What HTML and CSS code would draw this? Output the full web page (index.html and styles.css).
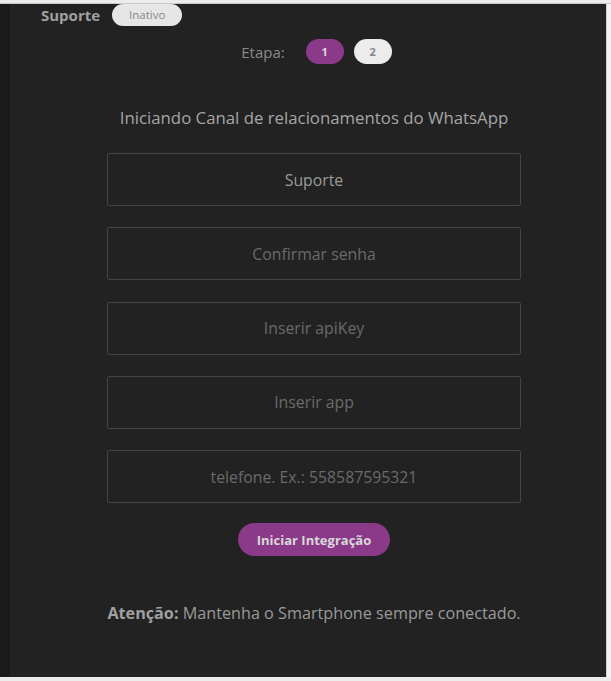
FILE: index.html
```html
<!DOCTYPE html>
<html lang="pt-BR">
<head>
  <meta charset="UTF-8">
  <title>Canal WhatsApp</title>
  <meta name="viewport" content="width=device-width, initial-scale=1">
  <link rel="stylesheet" href="styles.css">
</head>
<body>
  <div class="frame">
    <div class="side"></div>
    <div class="panel">
      <div class="header">
        <span class="channel">Suporte</span>
        <span class="status">Inativo</span>
      </div>

      <div class="steps">
        <span class="steps-label">Etapa:</span>
        <span class="step active">1</span>
        <span class="step">2</span>
      </div>

      <h3 class="title">Iniciando Canal de relacionamentos do WhatsApp</h3>

      <form class="form" id="integrationForm">
        <input type="text" value="Suporte">
        <input type="password" placeholder="Confirmar senha">
        <input type="text" placeholder="Inserir apiKey">
        <input type="text" placeholder="Inserir app">
        <input type="tel" placeholder="telefone. Ex.: 558587595321">
        <button type="submit">Iniciar Integração</button>
      </form>

      <p class="notice"><b>Atenção:</b> Mantenha o Smartphone sempre conectado.</p>
    </div>
    <div class="ruler"></div>
  </div>
</body>
</html>
```

FILE: styles.css
```css
body {
  margin: 0;
  background: #ececec;
  font-family: "Open Sans", Arial, sans-serif;
}
.frame {
  display: flex;
  height: 674px;
  margin-top: 3px;
  border-top: 1px solid #c8c8c8;
  box-sizing: border-box;
}
.side {
  width: 10px;
  background: #1a1a1a;
}
.panel {
  width: 596px;
  background: #222222;
  padding-left: 12px;
  box-sizing: border-box;
  color: #a8a8a8;
}
.ruler {
  flex: 1;
  background: #f2f2f2;
  border-left: 1px solid #d0d0d0;
}
.header {
  display: flex;
  align-items: center;
  gap: 12px;
  padding: 0 0 0 19px;
  height: 26px;
  margin-top: -2px;
}
.channel {
  font-weight: bold;
  font-size: 15px;
  color: #a0a0a0;
}
.status {
  background: #e6e6e6;
  color: #8a8a8a;
  font-size: 11.5px;
  line-height: 22px;
  height: 22px;
  border-radius: 12px;
  padding: 0 17px;
}
.steps {
  display: flex;
  justify-content: center;
  align-items: center;
  gap: 10px;
  margin-top: 11px;
  padding-left: 5px;
}
.steps-label {
  font-size: 15px;
  color: #8a8a8a;
  margin-right: 11px;
}
.step {
  width: 38px;
  height: 25px;
  line-height: 25px;
  border-radius: 13px;
  background: #ececec;
  color: #888;
  text-align: center;
  font-size: 11px;
  font-weight: bold;
}
.step.active {
  background: #8a3a88;
  color: #ddd;
}
.title {
  text-align: center;
  font-weight: normal;
  font-size: 16.8px;
  color: #a6a6a6;
  margin: 42px 0 24px;
}
.form {
  width: 414px;
  margin: 0 auto;
  display: flex;
  flex-direction: column;
  align-items: center;
  gap: 21.3px;
}
input {
  width: 100%;
  height: 53px;
  box-sizing: border-box;
  background: transparent;
  border: 1.5px solid #444;
  border-radius: 2px;
  text-align: center;
  font-family: "Open Sans", Arial, sans-serif;
  font-size: 15.8px;
  color: #9a9a9a;
  outline: none;
}
input::placeholder {
  color: #6a6a6a;
}
button {
  width: 152px;
  height: 33px;
  border: none;
  border-radius: 17px;
  background: #8a3a88;
  color: #d8d8d8;
  font-family: "Open Sans", Arial, sans-serif;
  font-weight: bold;
  font-size: 13px;
  cursor: pointer;
  margin-top: -1px;
}
.notice {
  text-align: center;
  font-size: 16.2px;
  color: #9a9a9a;
  margin-top: 46px;
}
.notice b {
  color: #a0a0a0;
}
```
